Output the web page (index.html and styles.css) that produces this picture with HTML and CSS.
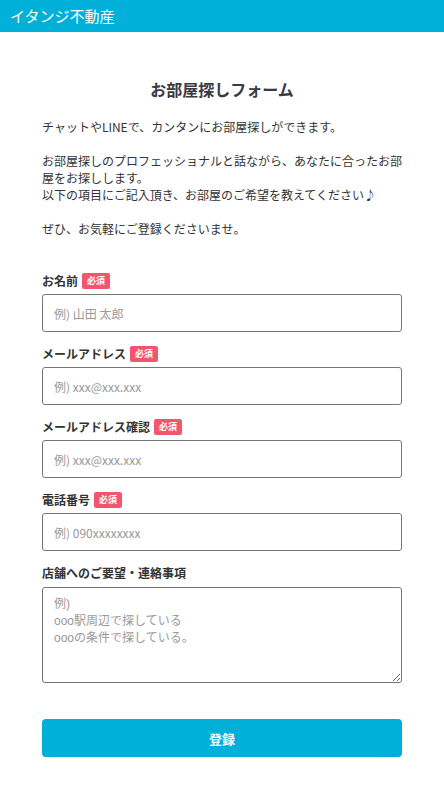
FILE: index.html
```html
<!DOCTYPE html>
<html lang="ja">
<head>
<meta charset="utf-8">
<title>イタンジ不動産</title>
<link rel="stylesheet" href="styles.css">
</head>
<body>
<header class="site-header">
  <span class="site-title">イタンジ不動産</span>
</header>
<main class="container">
  <h1 class="page-title">お部屋探しフォーム</h1>
  <p class="intro">チャットやLINEで、カンタンにお部屋探しができます。<br><br>お部屋探しのプロフェッショナルと話ながら、あなたに合ったお部屋をお探しします。<br>以下の項目にご記入頂き、お部屋のご希望を教えてください♪<br><br>ぜひ、お気軽にご登録くださいませ。</p>
  <form class="form">
    <div class="field">
      <label class="label">お名前<span class="badge">必須</span></label>
      <input class="input" type="text" placeholder="例) 山田 太郎">
    </div>
    <div class="field">
      <label class="label">メールアドレス<span class="badge">必須</span></label>
      <input class="input" type="text" placeholder="例) xxx@xxx.xxx">
    </div>
    <div class="field">
      <label class="label">メールアドレス確認<span class="badge">必須</span></label>
      <input class="input" type="text" placeholder="例) xxx@xxx.xxx">
    </div>
    <div class="field">
      <label class="label">電話番号<span class="badge">必須</span></label>
      <input class="input" type="text" placeholder="例) 090xxxxxxxx">
    </div>
    <div class="field">
      <label class="label">店舗へのご要望・連絡事項</label>
      <textarea class="textarea" placeholder="例)&#10;ooo駅周辺で探している&#10;oooの条件で探している。"></textarea>
    </div>
    <button class="submit" type="button">登録</button>
  </form>
</main>
</body>
</html>
```
FILE: styles.css
```css
* { box-sizing: border-box; }
html, body {
  margin: 0;
  padding: 0;
  background: #fff;
  font-family: "Noto Sans CJK JP", "Noto Sans", sans-serif;
  color: #333;
}
.site-header {
  height: 32px;
  background: #00b0d8;
  display: flex;
  align-items: center;
  padding-left: 10px;
}
.site-title {
  color: #fff;
  font-size: 15px;
  line-height: 1;
  margin-top: -1px;
}
.container {
  width: 360px;
  margin: 0 auto;
  padding-top: 45px;
  padding-bottom: 40px;
}
.page-title {
  margin: 0;
  font-size: 16px;
  line-height: 24px;
  font-weight: 700;
  text-align: center;
  color: #3a3a42;
}
.intro {
  margin: 17px 0 0;
  font-size: 12px;
  line-height: 17px;
  color: #333;
}
.form {
  margin-top: 35px;
  display: flex;
  flex-direction: column;
}
.field {
  display: flex;
  flex-direction: column;
  margin-bottom: 13px;
}
.label {
  display: flex;
  align-items: center;
  height: 17px;
  margin-bottom: 5px;
  font-size: 12px;
  font-weight: 700;
  color: #333;
}
.badge {
  display: inline-flex;
  align-items: center;
  justify-content: center;
  height: 16px;
  padding: 0 5px;
  margin-left: 4px;
  background: #f2566e;
  color: #fff;
  border-radius: 2px;
  font-size: 9px;
  font-weight: 700;
  line-height: 1;
}
.input, .textarea {
  width: 100%;
  border: 1px solid #767676;
  border-radius: 3px;
  font-family: inherit;
  font-size: 12px;
  color: #333;
  background: #fff;
  padding: 0 11px;
  margin: 0;
}
.input {
  height: 38px;
}
.textarea {
  height: 96px;
  margin-top: 1px;
  padding-top: 8px;
  line-height: 17px;
  resize: vertical;
  display: block;
  font-family: "Liberation Sans", "Noto Sans CJK JP", sans-serif;
}
.input::placeholder, .textarea::placeholder {
  color: #999;
}
.submit {
  margin-top: 23px;
  height: 38px;
  width: 100%;
  border: none;
  border-radius: 4px;
  background: #00b0d8;
  color: #fff;
  font-family: inherit;
  font-size: 13px;
  font-weight: 700;
}
```
